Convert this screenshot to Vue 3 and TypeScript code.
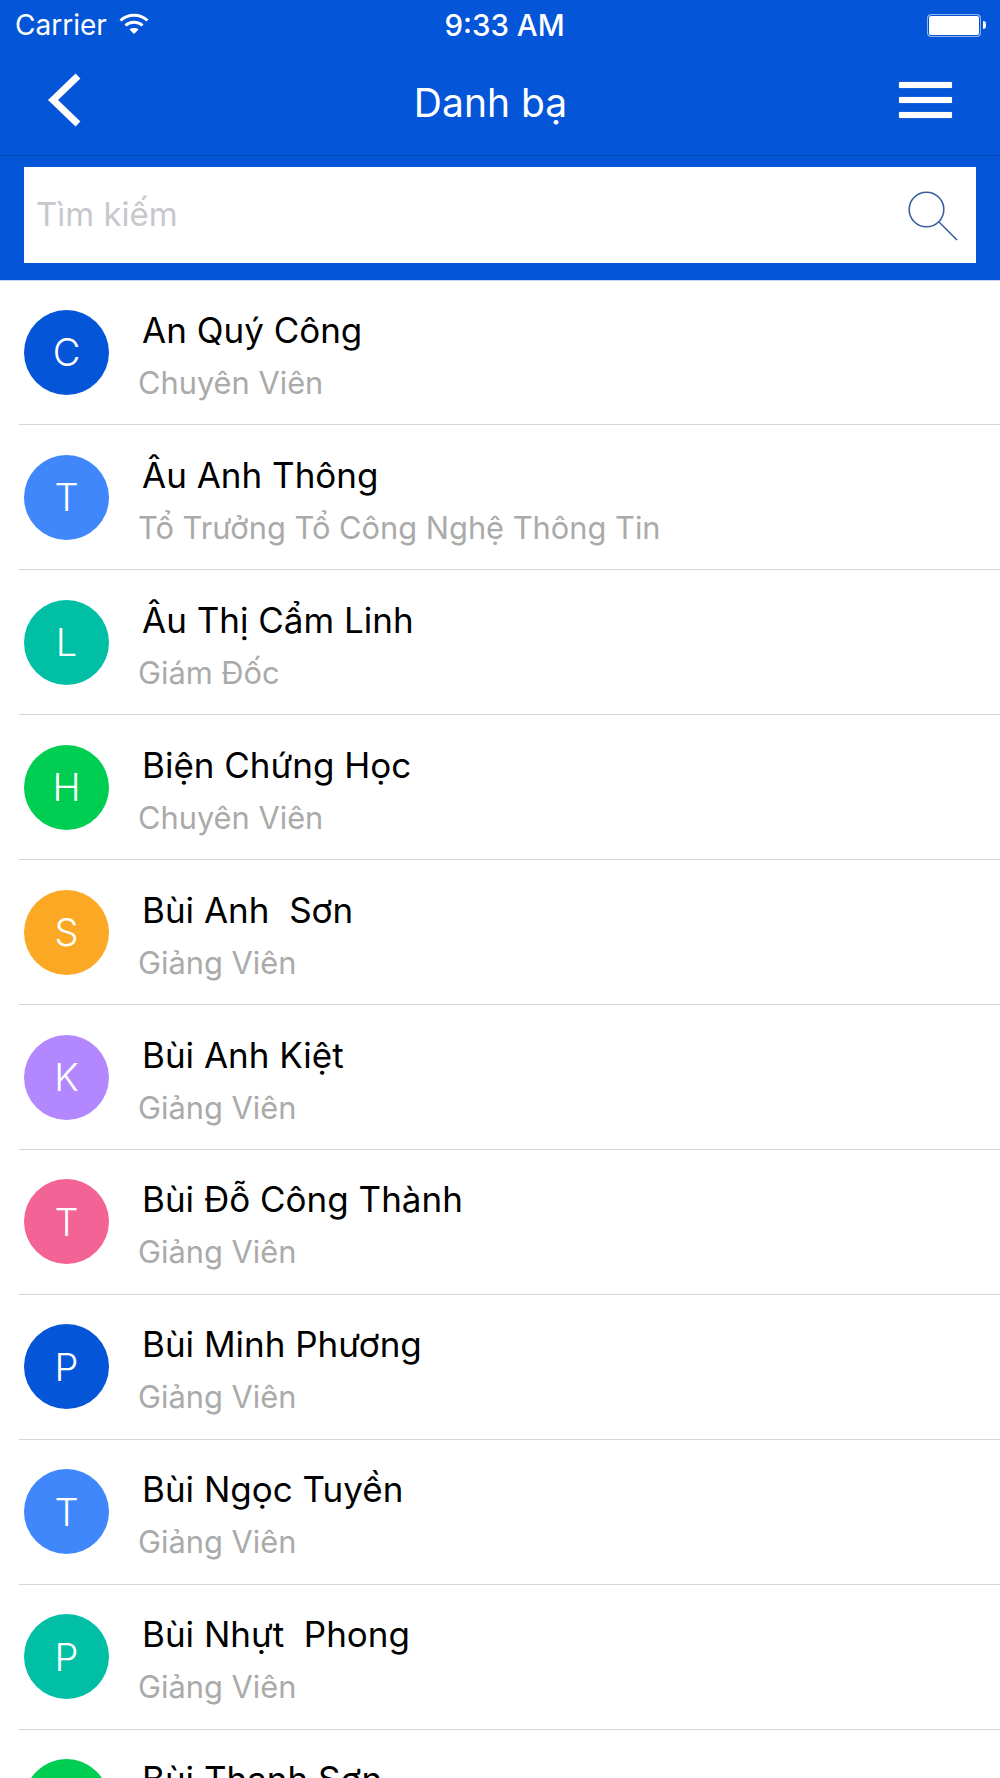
<template>
  <div class="screen">
    <header class="top">
      <div class="status">
        <div class="status-left">
          <span class="carrier">Carrier</span>
          <svg class="wifi" width="30" height="22" viewBox="0 0 30 22">
            <path d="M1.5 7.5C9 .5 21 .5 28.5 7.5" fill="none" stroke="#fff" stroke-width="3" />
            <path d="M6.5 12.5C11 8.2 19 8.2 23.5 12.5" fill="none" stroke="#fff" stroke-width="3" />
            <path d="M10.5 16.5C13 14.6 17 14.6 19.5 16.5L15 21Z" fill="#fff" />
          </svg>
        </div>
        <span class="time">9:33 AM</span>
        <div class="battery">
          <div class="battery-body"></div>
          <div class="battery-tip"></div>
        </div>
      </div>
      <div class="nav">
        <svg class="back" width="34" height="54" viewBox="0 0 34 54">
          <path d="M30 3L5 27L30 51" fill="none" stroke="#fff" stroke-width="7" />
        </svg>
        <h1 class="title">Danh bạ</h1>
        <div class="menu">
          <span></span>
          <span></span>
          <span></span>
        </div>
      </div>
      <div class="search-wrap">
        <div class="search">
          <span class="placeholder">Tìm kiếm</span>
          <svg class="search-icon" width="50" height="50" viewBox="0 0 50 50">
            <circle cx="18.5" cy="18.5" r="17.3" fill="none" stroke="#3a5f9e" stroke-width="1.6" />
            <path d="M31 31L49 49" fill="none" stroke="#3a5f9e" stroke-width="1.6" />
          </svg>
        </div>
      </div>
    </header>

    <ul class="list">
      <li v-for="(c, idx) in contacts" :key="idx" class="row">
        <div class="avatar" :style="{ background: c.color }">{{ c.letter }}</div>
        <div class="info">
          <div class="name">{{ c.name }}</div>
          <div class="role">{{ c.role }}</div>
        </div>
      </li>
    </ul>
  </div>
</template>

<script setup lang="ts">
interface Contact {
  letter: string;
  name: string;
  role: string;
  color: string;
}

const blue = '#0455d8';
const sky = '#3f87fb';
const teal = '#00bfa5';
const green = '#00ce52';
const orange = '#fba825';
const purple = '#b388ff';
const pink = '#f46395';

const contacts: Contact[] = [
  { letter: 'C', name: 'An Quý Công', role: 'Chuyên Viên', color: blue },
  { letter: 'T', name: 'Âu Anh Thông', role: 'Tổ Trưởng Tổ Công Nghệ Thông Tin', color: sky },
  { letter: 'L', name: 'Âu Thị Cẩm Linh', role: 'Giám Đốc', color: teal },
  { letter: 'H', name: 'Biện Chứng Học', role: 'Chuyên Viên', color: green },
  { letter: 'S', name: 'Bùi Anh  Sơn', role: 'Giảng Viên', color: orange },
  { letter: 'K', name: 'Bùi Anh Kiệt', role: 'Giảng Viên', color: purple },
  { letter: 'T', name: 'Bùi Đỗ Công Thành', role: 'Giảng Viên', color: pink },
  { letter: 'P', name: 'Bùi Minh Phương', role: 'Giảng Viên', color: blue },
  { letter: 'T', name: 'Bùi Ngọc Tuyền', role: 'Giảng Viên', color: sky },
  { letter: 'P', name: 'Bùi Nhựt  Phong', role: 'Giảng Viên', color: teal },
  { letter: 'S', name: 'Bùi Thanh Sơn', role: 'Giảng Viên', color: green },
];
</script>

<style scoped>
.screen {
  width: 1000px;
  height: 1778px;
  overflow: hidden;
  background: #fff;
  font-family: Inter, "Noto Sans", sans-serif;
}

.top {
  position: relative;
  background: #0455d8;
  box-shadow: 0 1px 0 #c5d6f5;
  color: #fff;
}

.status {
  display: grid;
  grid-template-columns: 1fr auto 1fr;
  align-items: center;
  height: 50px;
  padding: 0 14px 0 15px;
}

.status-left {
  display: flex;
  align-items: center;
  gap: 12px;
}

.carrier {
  font-size: 28px;
}

.wifi {
  margin-top: -3px;
}

.time {
  margin-left: 8px;
  font-size: 29.5px;
  font-weight: 500;
}

.battery {
  display: flex;
  align-items: center;
  justify-content: flex-end;
}

.battery-body {
  width: 54px;
  height: 23px;
  box-sizing: border-box;
  border: 1px solid #8fb0ec;
  border-radius: 4px;
  background: #fff;
  box-shadow: inset 0 0 0 1px #0455d8;
}

.battery-tip {
  width: 3px;
  height: 8px;
  margin-left: 2px;
  border-radius: 0 3px 3px 0;
  background: #fff;
}

.nav {
  display: flex;
  align-items: center;
  justify-content: space-between;
  height: 105px;
  padding: 0 48px;
  border-bottom: 1px solid #0349b8;
}

.back {
  margin-bottom: 6px;
}

.title {
  margin: 0;
  font-size: 39px;
  font-weight: 400;
}

.menu {
  display: flex;
  flex-direction: column;
  gap: 9px;
  margin-bottom: 6px;
}

.menu span {
  display: block;
  width: 53px;
  height: 6px;
  border-radius: 1px;
  background: #fff;
  box-shadow: 0 0 1px rgba(255, 255, 255, 0.7);
}

.search-wrap {
  padding: 11px 24px 17px;
}

.search {
  display: flex;
  align-items: center;
  justify-content: space-between;
  height: 96px;
  padding: 0 18px 0 12px;
  background: #fff;
}

.placeholder {
  margin-top: -3px;
  font-size: 33px;
  color: #c7c7cd;
}

.search-icon {
  margin-top: 2px;
}

.list {
  margin: 0;
  padding: 0.5px 0 0 19px;
  list-style: none;
}

.row {
  display: flex;
  align-items: center;
  box-sizing: border-box;
  height: 144.93px;
  padding-left: 5px;
  border-bottom: 1px solid #d6d6d6;
}

.avatar {
  display: flex;
  flex: none;
  align-items: center;
  justify-content: center;
  width: 85px;
  height: 85px;
  border-radius: 50%;
  color: #fff;
  font-size: 38px;
  font-weight: 300;
}

.info {
  margin: 5px 0 0 29px;
}

.name {
  margin-left: 4px;
  color: #000;
  font-size: 35px;
  line-height: 42px;
  white-space: pre;
}

.role {
  margin-top: 14px;
  color: #aaa;
  font-size: 30.8px;
  line-height: 36px;
}
</style>
